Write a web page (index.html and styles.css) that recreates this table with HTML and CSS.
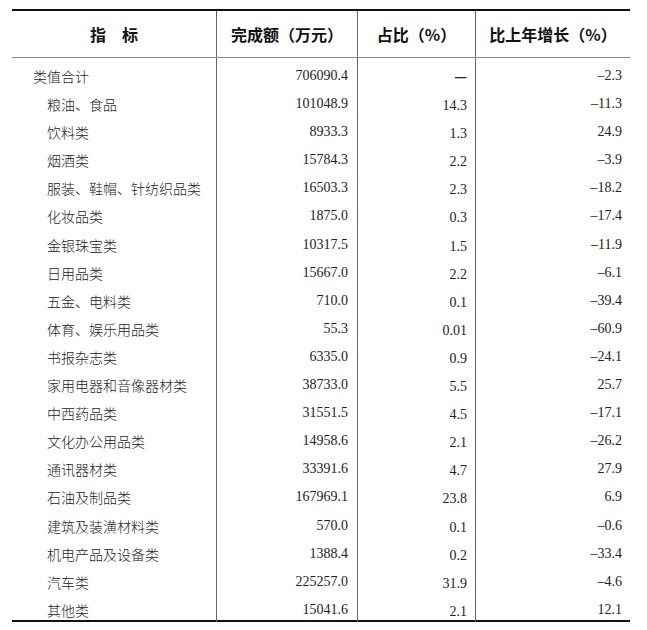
FILE: index.html
```html
<!DOCTYPE html>
<html lang="zh-CN">
<head>
<meta charset="utf-8">
<title>类值统计</title>
<link rel="stylesheet" href="styles.css">
</head>
<body>
<div class="table">
  <div class="row head">
    <div class="cell c1">指　标</div>
    <div class="cell c2">完成额（万元）</div>
    <div class="cell c3">占比（%）</div>
    <div class="cell c4">比上年增长（%）</div>
  </div>
  <div class="body">
    <div class="row"><div class="cell c1 total">类值合计</div><div class="cell c2">706090.4</div><div class="cell c3 dash">—</div><div class="cell c4">–2.3</div></div>
    <div class="row"><div class="cell c1">粮油、食品</div><div class="cell c2">101048.9</div><div class="cell c3">14.3</div><div class="cell c4">–11.3</div></div>
    <div class="row"><div class="cell c1">饮料类</div><div class="cell c2">8933.3</div><div class="cell c3">1.3</div><div class="cell c4">24.9</div></div>
    <div class="row"><div class="cell c1">烟酒类</div><div class="cell c2">15784.3</div><div class="cell c3">2.2</div><div class="cell c4">–3.9</div></div>
    <div class="row"><div class="cell c1">服装、鞋帽、针纺织品类</div><div class="cell c2">16503.3</div><div class="cell c3">2.3</div><div class="cell c4">–18.2</div></div>
    <div class="row"><div class="cell c1">化妆品类</div><div class="cell c2">1875.0</div><div class="cell c3">0.3</div><div class="cell c4">–17.4</div></div>
    <div class="row"><div class="cell c1">金银珠宝类</div><div class="cell c2">10317.5</div><div class="cell c3">1.5</div><div class="cell c4">–11.9</div></div>
    <div class="row"><div class="cell c1">日用品类</div><div class="cell c2">15667.0</div><div class="cell c3">2.2</div><div class="cell c4">–6.1</div></div>
    <div class="row"><div class="cell c1">五金、电料类</div><div class="cell c2">710.0</div><div class="cell c3">0.1</div><div class="cell c4">–39.4</div></div>
    <div class="row"><div class="cell c1">体育、娱乐用品类</div><div class="cell c2">55.3</div><div class="cell c3">0.01</div><div class="cell c4">–60.9</div></div>
    <div class="row"><div class="cell c1">书报杂志类</div><div class="cell c2">6335.0</div><div class="cell c3">0.9</div><div class="cell c4">–24.1</div></div>
    <div class="row"><div class="cell c1">家用电器和音像器材类</div><div class="cell c2">38733.0</div><div class="cell c3">5.5</div><div class="cell c4">25.7</div></div>
    <div class="row"><div class="cell c1">中西药品类</div><div class="cell c2">31551.5</div><div class="cell c3">4.5</div><div class="cell c4">–17.1</div></div>
    <div class="row"><div class="cell c1">文化办公用品类</div><div class="cell c2">14958.6</div><div class="cell c3">2.1</div><div class="cell c4">–26.2</div></div>
    <div class="row"><div class="cell c1">通讯器材类</div><div class="cell c2">33391.6</div><div class="cell c3">4.7</div><div class="cell c4">27.9</div></div>
    <div class="row"><div class="cell c1">石油及制品类</div><div class="cell c2">167969.1</div><div class="cell c3">23.8</div><div class="cell c4">6.9</div></div>
    <div class="row"><div class="cell c1">建筑及装潢材料类</div><div class="cell c2">570.0</div><div class="cell c3">0.1</div><div class="cell c4">–0.6</div></div>
    <div class="row"><div class="cell c1">机电产品及设备类</div><div class="cell c2">1388.4</div><div class="cell c3">0.2</div><div class="cell c4">–33.4</div></div>
    <div class="row"><div class="cell c1">汽车类</div><div class="cell c2">225257.0</div><div class="cell c3">31.9</div><div class="cell c4">–4.6</div></div>
    <div class="row"><div class="cell c1">其他类</div><div class="cell c2">15041.6</div><div class="cell c3">2.1</div><div class="cell c4">12.1</div></div>
  </div>
</div>
</body>
</html>
```
FILE: styles.css
```css
html, body {
  margin: 0;
  padding: 0;
  background: #fff;
}

.table {
  margin: 9px 0 0 12px;
  width: 618px;
  border-top: 2px solid #111;
  border-bottom: 2px solid #111;
  font-family: "Liberation Serif", "Noto Sans CJK SC", serif;
  color: #222;
}

.row {
  display: grid;
  grid-template-columns: 204px 141px 118px 155px;
}

.head {
  height: 46px;
  border-bottom: 1px solid #8a8a8a;
  font-family: "Noto Sans CJK SC", sans-serif;
  font-weight: 700;
  font-size: 16px;
  color: #111;
}

.head .cell {
  display: flex;
  align-items: center;
  justify-content: center;
  padding: 0;
}

.cell {
  box-sizing: border-box;
}

.c2, .c3, .c4 {
  border-left: 1px solid #666;
}

.body .row {
  height: 28.1px;
}

.body .cell {
  font-size: 14px;
  line-height: 20px;
  padding-top: 8px;
}

.body .c1 {
  font-family: "Noto Sans CJK SC", sans-serif;
  font-weight: 300;
  padding-left: 35px;
  letter-spacing: 0;
}

.body .c1.total {
  padding-left: 21px;
}

.body .c2 {
  text-align: right;
  padding-right: 9px;
}

.body .c3 {
  text-align: right;
  padding-right: 8px;
  padding-top: 10px;
}

.body .c3.dash {
  padding-top: 8px;
  font-family: "Noto Sans CJK SC", sans-serif;
  font-weight: 700;
}

.body .c4 {
  text-align: right;
  padding-right: 8px;
}
```
